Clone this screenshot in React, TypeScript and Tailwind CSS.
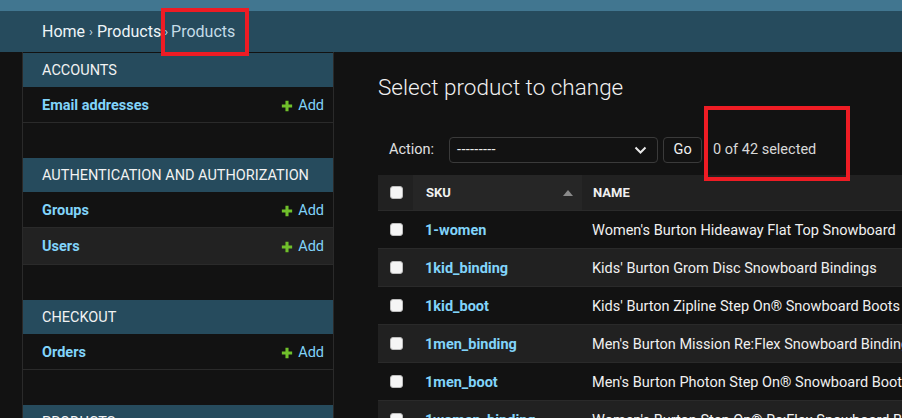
import React from "react";

function Plus() {
  return (
    <svg width="12" height="12" viewBox="0 0 14 14" className="mr-[5px] shrink-0">
      <path d="M5.2 1h3.6v4.2H13v3.6H8.8V13H5.2V8.8H1V5.2h4.2z" fill="#70bf2b" />
    </svg>
  );
}

type Row = { name: string; highlight?: boolean };

function Module({ title, rows, last }: { title: string; rows: Row[]; last?: boolean }) {
  return (
    <div className={last ? "" : "mb-[35px]"}>
      <div className="flex h-[34px] items-center bg-[#264b5d] pl-[19px] pt-px text-[14.5px] uppercase text-[#f2f2f2]">
        {title}
      </div>
      {rows.map((r) => (
        <div
          key={r.name}
          className={`flex items-center justify-between border-b border-[#2a2a2a] pl-[19px] pr-[9px] pt-[2px] text-[14.5px] ${
            r.highlight ? "h-[37px] bg-[#222222]" : "h-[36px] bg-[#121212]"
          }`}
        >
          <span className="font-bold text-[#81d4fa]">{r.name}</span>
          <span className="flex items-center text-[#81d4fa]">
            <Plus />
            Add
          </span>
        </div>
      ))}
    </div>
  );
}

function Checkbox() {
  return <span className="block h-[13px] w-[13px] rounded-[3px] border border-[#bdbdbd] bg-[#f5f5f5]" />;
}

const products = [
  ["1-women", "Women's Burton Hideaway Flat Top Snowboard"],
  ["1kid_binding", "Kids' Burton Grom Disc Snowboard Bindings"],
  ["1kid_boot", "Kids' Burton Zipline Step On® Snowboard Boots"],
  ["1men_binding", "Men's Burton Mission Re:Flex Snowboard Bindings"],
  ["1men_boot", "Men's Burton Photon Step On® Snowboard Boots"],
  ["1women_binding", "Women's Burton Step On® Re:Flex Snowboard Bindings"],
];

export default function App() {
  return (
    <div className="relative h-[418px] w-[902px] overflow-hidden bg-[#121212] font-['Roboto',sans-serif]">
      <div className="h-[11px] bg-[#417690]" />
      <div className="flex h-[41px] items-center bg-[#264b5d] pl-[42px] text-[16px] text-[#c4dce8]">
        <span className="text-[#eef5f9]">Home</span>
        <span className="mx-[4px] text-[13px]">›</span>
        <span className="text-[#eef5f9]">Products</span>
        <span className="mx-[3px] text-[13px]">›</span>
        <span>Products</span>
      </div>
      <div className="flex">
        <div className="h-[366px] w-[23px] shrink-0 border-r border-[#2a2a2a]" />
        <nav className="h-[366px] w-[311px] shrink-0 border-r border-[#2a2a2a] pt-px">
          <Module title="Accounts" rows={[{ name: "Email addresses" }]} />
          <Module title="Authentication and Authorization" rows={[{ name: "Groups" }, { name: "Users", highlight: true }]} />
          <Module title="Checkout" rows={[{ name: "Orders" }]} />
          <Module title="Products" rows={[{ name: "Products" }]} last />
        </nav>
        <main className="min-w-0 flex-1 pl-[44px]">
          <h1 className="mt-[23px] text-[22.5px] font-light leading-[24px] text-[#f0f0f0]">Select product to change</h1>
          <div className="mt-[38px] flex h-[26px] items-center whitespace-nowrap pl-[11px] text-[14.5px]">
            <span className="text-[#e0e0e0]">Action:</span>
            <div className="ml-[15px] flex h-[26px] w-[209px] items-center justify-between rounded-[4px] border border-[#3a3a3a] bg-[#121212] pl-[7px] pr-[10px]">
              <span className="tracking-[0.3px] text-[#e8e8e8]">---------</span>
              <svg width="13" height="8" viewBox="0 0 13 8">
                <path d="M1.5 1.5l5 5 5-5" fill="none" stroke="#e8e8e8" strokeWidth="2" />
              </svg>
            </div>
            <div className="ml-[5px] flex h-[26px] w-[39px] items-center justify-center rounded-[4px] border border-[#3a3a3a] text-[#f0f0f0]">
              Go
            </div>
            <span className="ml-[11px] text-[#d8d8d8]">0 of 42 selected</span>
          </div>
          <div className="mt-[12px] w-[720px] whitespace-nowrap text-[14.5px]">
            <div className="flex h-[36px] items-center border-b border-[#2a2a2a] bg-[#212121] text-[13px] font-bold uppercase text-[#f0f0f0]">
              <div className="flex h-full w-[35px] items-center pl-[12px]">
                <Checkbox />
              </div>
              <div className="flex h-full w-[169px] items-center justify-between bg-[#262626] pl-[13px] pr-[9px] pt-px">
                <span>SKU</span>
                <svg width="10" height="6" viewBox="0 0 10 6">
                  <path d="M0 6L5 0l5 6z" fill="#8a8a8a" />
                </svg>
              </div>
              <div className="flex h-full flex-1 items-center pl-[11px] pt-px">NAME</div>
            </div>
            {products.map(([sku, name], i) => (
              <div
                key={sku}
                className={`flex h-[38px] items-center border-b border-[#2a2a2a] ${i % 2 === 1 ? "bg-[#212121]" : "bg-[#121212]"}`}
              >
                <div className="flex w-[35px] items-center pl-[12px]">
                  <Checkbox />
                </div>
                <div className="w-[169px] pl-[12px] pt-[2px] font-bold text-[#81d4fa]">{sku}</div>
                <div className="pl-[10px] pt-[2px] text-[#f0f0f0]">{name}</div>
              </div>
            ))}
          </div>
        </main>
      </div>
      <div className="absolute left-[161px] top-[8px] h-[48px] w-[88px] border-[4px] border-[#ee1c24]" />
      <div className="absolute left-[704px] top-[106px] h-[75px] w-[146px] border-[4px] border-[#ee1c24]" />
    </div>
  );
}
